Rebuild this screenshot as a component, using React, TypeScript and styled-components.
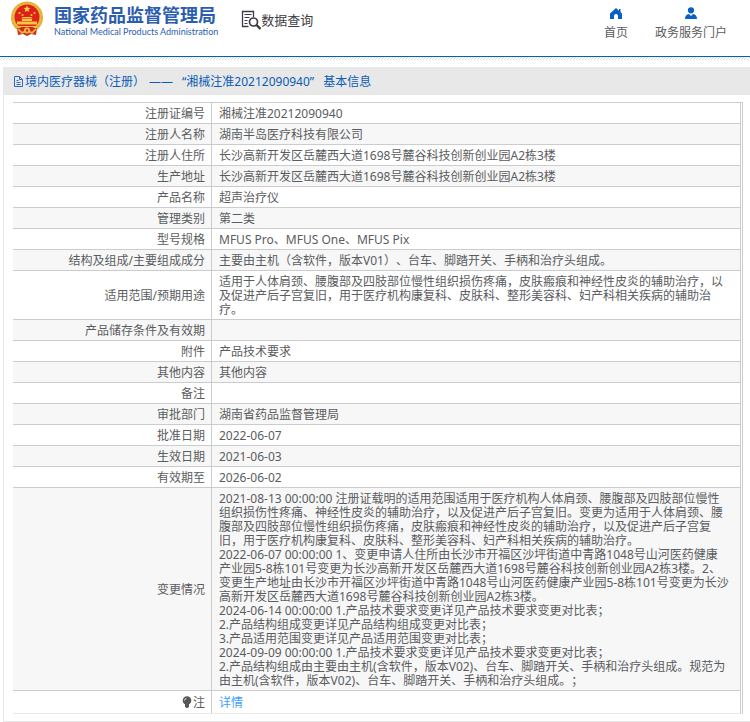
import React from "react";
import styled, { createGlobalStyle } from "styled-components";

const GlobalStyle = createGlobalStyle`
  * { box-sizing: border-box; }
  body {
    margin: 0;
    background: #fff;
    color: #5a5c60;
    font: 12px/14px "Noto Sans", "Noto Sans CJK SC", sans-serif;
    text-spacing-trim: space-all;
  }
  a { color: inherit; text-decoration: none; }
`;

const Header = styled.header`
  display: flex;
  align-items: flex-start;
  height: 57px;
  padding: 0 23px 0 10px;
  border-bottom: 1px solid #0b5cb5;
`;

const Brand = styled.a`
  display: flex;
  gap: 10px;
  color: #2b5dae;
`;

const BrandText = styled.span`
  display: flex;
  flex-direction: column;
  padding-top: 4px;
`;

const BrandName = styled.span`
  font-size: 18px;
  line-height: 22px;
  font-weight: 700;
  white-space: nowrap;
`;

const BrandSub = styled.span`
  font-family: Lato, sans-serif;
  font-size: 9px;
  line-height: 12px;
  font-weight: 400;
  white-space: nowrap;
`;

const QueryLink = styled.a`
  display: flex;
  align-items: center;
  margin: 10px 0 0 23px;
  color: #3d3d45;
  font-size: 13px;
  line-height: 20px;
  white-space: nowrap;
`;

const Nav = styled.nav`
  display: flex;
  gap: 27px;
  margin-left: auto;
  padding-top: 7px;
`;

const NavLink = styled.a`
  display: flex;
  flex-direction: column;
  align-items: center;
  gap: 4px;
  line-height: 16px;
  white-space: nowrap;
  svg { fill: #0a5fc4; }
`;

const Hatch = styled.div`
  height: 3px;
  background: linear-gradient(135deg, transparent 40%, #d8dcdc 40% 60%, transparent 60%) 0 0 / 3px 3px;
`;

const Panel = styled.main`
  margin: 7px 0 0 3px;
  padding-bottom: 7px;
  border-left: 1px solid #e8e8e8;
  border-bottom: 1px solid #e8e8e8;
`;

const PanelTitle = styled.h1`
  display: flex;
  align-items: center;
  height: 28px;
  margin: 0 0 7px;
  padding: 2px 0 0 9px;
  background: #e8e8e8;
  color: #0a5cb8;
  font-size: 12px;
  line-height: 16px;
  font-weight: 400;
`;

const TitlePart = styled.span<{ $gap?: number }>`
  margin-left: ${(p) => p.$gap ?? 0}px;
  white-space: nowrap;
`;

const TableFrame = styled.div`
  margin: 0 7px 0 9px;
  padding-right: 1px;
  border-top: 1px solid #ccc;
  border-right: 1px solid #ccc;
`;

const Table = styled.table`
  width: 100%;
  border-collapse: separate;
  border-spacing: 0;
  table-layout: fixed;
`;

const Row = styled.tr`
  &:nth-child(even) { background: #f7f7f7; }
`;

const cellBorder = (last?: boolean) => `1px solid ${last ? "#e8eaee" : "#ccc"}`;

const Label = styled.th<{ $last?: boolean }>`
  width: 199px;
  height: ${(p) => (p.$last ? 23 : 21)}px;
  padding: 4px 6px 2px 0;
  border-right: 1px solid #ccc;
  border-bottom: ${(p) => cellBorder(p.$last)};
  font-weight: 400;
  text-align: right;
`;

const Value = styled.td<{ $last?: boolean }>`
  padding: 4px 11px 2px 7px;
  border-right: 1px solid #ccc;
  border-bottom: ${(p) => cellBorder(p.$last)};
  white-space: pre-line;
`;

const DetailLink = styled.a`
  color: #409eff;
`;

const BulbIcon = styled.svg`
  margin-right: 1px;
  vertical-align: -1px;
`;

const Emblem = () => (
  <svg width="34" height="38" viewBox="0 0 34 38" aria-hidden="true">
    <circle cx="17" cy="17.500" r="16" fill="#e7b83f" />
    <path d="M7 28h20l-1 7-5-1-4 2-4-2-5 1z" fill="#d42a20" />
    <path d="M8 29l4 4 5-3 5 3 4-4" fill="none" stroke="#edbf45" strokeWidth="1.600" />
    <circle cx="17" cy="17.500" r="15" fill="none" stroke="#dba234" strokeWidth="1" strokeDasharray="2 2" />
    <circle cx="17" cy="17" r="12.500" fill="#df2118" />
    <path d="M17 5.500l1 2.300 2.500.2-1.900 1.600.6 2.400-2.200-1.300-2.200 1.300.6-2.400L13.500 8l2.500-.2z" fill="#f8d349" />
    <g fill="#f5c744">
      <circle cx="9.500" cy="13" r="1.100" />
      <circle cx="12.500" cy="15" r="1.100" />
      <circle cx="21.500" cy="15" r="1.100" />
      <circle cx="24.500" cy="13" r="1.100" />
      <path d="M11 18.500l2-1.500h8l2 1.500zM12 19h10v2H12zM7 21.500h20v3H7z" />
      <path d="M8 26h18v1H8z" />
    </g>
    <circle cx="17" cy="30.500" r="3" fill="#edbf45" />
    <circle cx="17" cy="30.500" r="1.300" fill="#d42a20" />
  </svg>
);

const QueryIcon = () => (
  <svg width="20" height="20" viewBox="0 0 20 20" fill="none" stroke="#3a3a48" aria-hidden="true">
    <path d="M7.500 16.500H1.500V1.500h11V7" strokeWidth="1.300" />
    <path d="M3.500 4.500h7M3.500 7.500h5M3.500 10.500h3M3.500 13.500h3" />
    <circle cx="12.500" cy="12" r="4" strokeWidth="1.700" />
    <path d="M15.500 15l4 4" strokeWidth="2.400" />
  </svg>
);

const HomeIcon = () => (
  <svg width="14" height="14" viewBox="0 0 14 14" aria-hidden="true">
    <path d="M7 1L1 6.500V12h4V9a2 2 0 0 1 4 0v3h4V6.500l-1.500-1.400V2h-1.500v1.700z" />
  </svg>
);

const UserIcon = () => (
  <svg width="14" height="14" viewBox="0 0 14 14" aria-hidden="true">
    <circle cx="7" cy="3.300" r="3.100" />
    <path d="M1 12c0-3 1.500-4.500 4-5l2 2 2-2c2.500.5 4 2 4 5z" />
  </svg>
);

const DocIcon = () => (
  <svg width="12" height="12" viewBox="0 0 12 12" fill="none" stroke="#2a6cc0" aria-hidden="true">
    <path d="M1.500.500h5l3 3v7h-8zM6.500.500v3h3M3.500 4.500h2M3.500 6.500h4M3.500 8.500h4" />
  </svg>
);

const RECORDS: [string, string][] = [
  ["注册证编号", "湘械注准20212090940"],
  ["注册人名称", "湖南半岛医疗科技有限公司"],
  ["注册人住所", "长沙高新开发区岳麓西大道1698号麓谷科技创新创业园A2栋3楼"],
  ["生产地址", "长沙高新开发区岳麓西大道1698号麓谷科技创新创业园A2栋3楼"],
  ["产品名称", "超声治疗仪"],
  ["管理类别", "第二类"],
  ["型号规格", "MFUS Pro、MFUS One、MFUS Pix"],
  ["结构及组成/主要组成成分", "主要由主机（含软件，版本V01）、台车、脚踏开关、手柄和治疗头组成。"],
  [
    "适用范围/预期用途",
    "适用于人体肩颈、腰腹部及四肢部位慢性组织损伤疼痛，皮肤瘢痕和神经性皮炎的辅助治疗，以及促进产后子宫复旧，用于医疗机构康复科、皮肤科、整形美容科、妇产科相关疾病的辅助治疗。",
  ],
  ["产品储存条件及有效期", ""],
  ["附件", "产品技术要求"],
  ["其他内容", "其他内容"],
  ["备注", ""],
  ["审批部门", "湖南省药品监督管理局"],
  ["批准日期", "2022-06-07"],
  ["生效日期", "2021-06-03"],
  ["有效期至", "2026-06-02"],
  [
    "变更情况",
    [
      "2021-08-13 00:00:00 注册证载明的适用范围适用于医疗机构人体肩颈、腰腹部及四肢部位慢性组织损伤性疼痛、神经性皮炎的辅助治疗，以及促进产后子宫复旧。变更为适用于人体肩颈、腰腹部及四肢部位慢性组织损伤疼痛，皮肤瘢痕和神经性皮炎的辅助治疗，以及促进产后子宫复旧，用于医疗机构康复科、皮肤科、整形美容科、妇产科相关疾病的辅助治疗。",
      "2022-06-07 00:00:00 1、变更申请人住所由长沙市开福区沙坪街道中青路1048号山河医药健康产业园5-8栋101号变更为长沙高新开发区岳麓西大道1698号麓谷科技创新创业园A2栋3楼。2、变更生产地址由长沙市开福区沙坪街道中青路1048号山河医药健康产业园5-8栋101号变更为长沙高新开发区岳麓西大道1698号麓谷科技创新创业园A2栋3楼。",
      "2024-06-14 00:00:00 1.产品技术要求变更详见产品技术要求变更对比表；",
      "2.产品结构组成变更详见产品结构组成变更对比表；",
      "3.产品适用范围变更详见产品适用范围变更对比表；",
      "2024-09-09 00:00:00 1.产品技术要求变更详见产品技术要求变更对比表；",
      "2.产品结构组成由主要由主机(含软件，版本V02)、台车、脚踏开关、手柄和治疗头组成。规范为由主机(含软件，版本V02)、台车、脚踏开关、手柄和治疗头组成。；",
    ].join("\n"),
  ],
];

export default function App() {
  return (
    <>
      <GlobalStyle />
      <Header lang="zh-CN">
        <Brand href="#">
          <Emblem />
          <BrandText>
            <BrandName>国家药品监督管理局</BrandName>
            <BrandSub>National Medical Products Administration</BrandSub>
          </BrandText>
        </Brand>
        <QueryLink href="#query">
          <QueryIcon />
          数据查询
        </QueryLink>
        <Nav>
          <NavLink href="#home">
            <HomeIcon />
            首页
          </NavLink>
          <NavLink href="#portal">
            <UserIcon />
            政务服务门户
          </NavLink>
        </Nav>
      </Header>
      <Hatch />
      <Panel lang="zh-CN">
        <PanelTitle>
          <DocIcon />
          <TitlePart>境内医疗器械（注册）</TitlePart>
          <TitlePart $gap={4}>——</TitlePart>
          <TitlePart $gap={9}>“湘械注准20212090940”</TitlePart>
          <TitlePart $gap={9}>基本信息</TitlePart>
        </PanelTitle>
        <TableFrame>
          <Table>
            <tbody>
              {RECORDS.map(([label, value]) => (
                <Row key={label}>
                  <Label scope="row">{label}</Label>
                  <Value>{value}</Value>
                </Row>
              ))}
              <Row>
                <Label scope="row" $last>
                  <BulbIcon width="10" height="12" viewBox="0 0 10 12" aria-hidden="true">
                    <circle cx="5" cy="4.500" r="4.300" fill="#55575b" />
                    <path d="M3 8h4v2.500L5.800 12H4.200L3 10.500z" fill="#55575b" />
                    <path d="M2.500 4.500a2.500 2.500 0 0 1 2-2.300" fill="none" stroke="#ddd" />
                  </BulbIcon>
                  注
                </Label>
                <Value $last>
                  <DetailLink href="#detail">详情</DetailLink>
                </Value>
              </Row>
            </tbody>
          </Table>
        </TableFrame>
      </Panel>
    </>
  );
}
